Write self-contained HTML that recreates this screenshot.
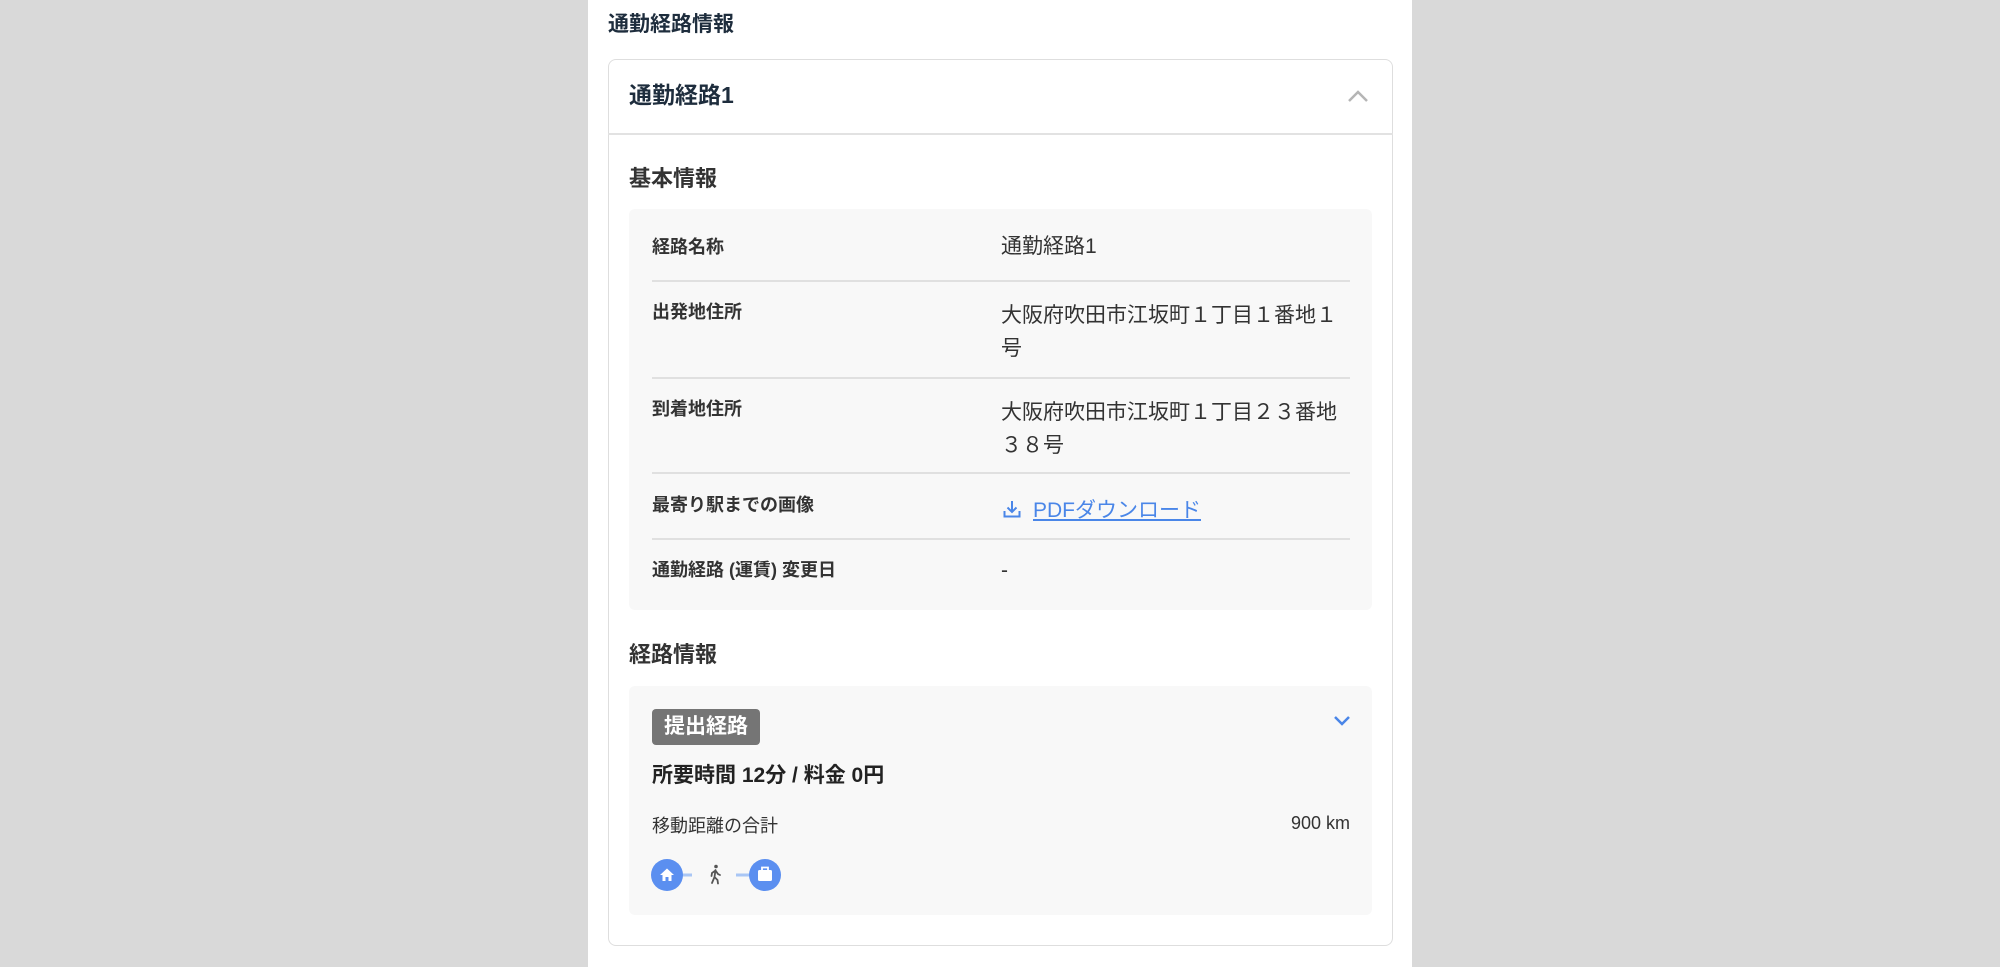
<!DOCTYPE html>
<html><head><meta charset="utf-8"><style>
*{margin:0;padding:0;box-sizing:border-box}
body{width:2000px;height:967px;background:#d9d9d9;font-family:"Liberation Sans","Noto Sans CJK JP",sans-serif;color:#333;position:relative;overflow:hidden}
.panel{position:absolute;left:588px;top:0;width:824px;height:967px;background:#fff}
.a{position:absolute;white-space:nowrap;line-height:1}
.t{font-weight:bold;color:#1e2d3d}
.card{position:absolute;left:608px;top:59px;width:785px;height:887px;border:1.5px solid #dedede;border-radius:8px;background:#fff}
.hb{position:absolute;left:608px;top:133px;width:785px;height:2px;background:#e2e2e2}
.box{position:absolute;background:#f8f8f8;border-radius:6px}
.lbl{font-weight:bold;font-size:18px;color:#333}
.val{font-size:21px;color:#333}
.div{position:absolute;left:652px;width:698px;height:2px;background:#e0e0e0}
</style></head><body>
<div class="panel"></div>
<div class="a t" style="left:608px;top:14px;font-size:21px">通勤経路情報</div>
<div class="card"></div>
<div class="hb"></div>
<div class="a t" style="left:629px;top:84px;font-size:23px">通勤経路1</div>
<svg class="a" style="left:1347px;top:89px" width="22" height="14" viewBox="0 0 22 14"><path d="M2 12 L11 3 L20 12" fill="none" stroke="#b5b5b5" stroke-width="2.5"/></svg>
<div class="a t" style="left:629px;top:168px;font-size:22px;color:#333">基本情報</div>
<div class="box" style="left:629px;top:209px;width:743px;height:401px"></div>
<div class="a lbl" style="left:652px;top:238px">経路名称</div>
<div class="a val" style="left:1001px;top:236px">通勤経路1</div>
<div class="div" style="top:280px"></div>
<div class="a lbl" style="left:652px;top:303px">出発地住所</div>
<div class="a val" style="left:1001px;top:299px;line-height:33px;white-space:normal;width:360px">大阪府吹田市江坂町１丁目１番地１<br>号</div>
<div class="div" style="top:377px"></div>
<div class="a lbl" style="left:652px;top:400px">到着地住所</div>
<div class="a val" style="left:1001px;top:396px;line-height:33px;white-space:normal;width:360px">大阪府吹田市江坂町１丁目２３番地<br>３８号</div>
<div class="div" style="top:472px"></div>
<div class="a lbl" style="left:652px;top:496px">最寄り駅までの画像</div>
<svg class="a" style="left:1002px;top:499px" width="20" height="20" viewBox="0 0 20 20"><path d="M10 2v11M5.5 8.5 10 13l4.5-4.5M2.5 12v5.5h15V12" fill="none" stroke="#4a86e8" stroke-width="2"/></svg>
<div class="a val" style="left:1033px;top:500px;color:#4a86e8;text-decoration:underline">PDFダウンロード</div>
<div class="div" style="top:538px"></div>
<div class="a lbl" style="left:652px;top:561px">通勤経路 (運賃) 変更日</div>
<div class="a val" style="left:1001px;top:560px">-</div>
<div class="a t" style="left:629px;top:644px;font-size:22px;color:#333">経路情報</div>
<div class="box" style="left:629px;top:686px;width:743px;height:229px"></div>
<div class="a" style="left:652px;top:709px;width:108px;height:36px;background:#757575;border-radius:4px;color:#fff;font-weight:bold;font-size:21px;line-height:36px;text-align:center">提出経路</div>
<svg class="a" style="left:1333px;top:714px" width="18" height="14" viewBox="0 0 18 14"><path d="M2 3 L9 10 L16 3" fill="none" stroke="#4a86e8" stroke-width="2.5"/></svg>
<div class="a" style="left:652px;top:765px;font-size:21px;font-weight:bold;color:#222">所要時間 12分 / 料金 0円</div>
<div class="a" style="left:652px;top:817px;font-size:18px;color:#333">移動距離の合計</div>
<div class="a" style="left:1270px;top:814px;width:80px;text-align:right;font-size:18px;color:#333">900 km</div>
<svg class="a" style="left:650px;top:858px" width="135" height="34" viewBox="0 0 135 34">
<rect x="30" y="15.5" width="12" height="3" fill="#a9c6f5"/>
<rect x="86" y="15.5" width="14" height="3" fill="#a9c6f5"/>
<circle cx="17" cy="17" r="16" fill="#5b8ff0"/>
<path d="M10 17 L17 10.5 L24 17 H21.5 V23 H18.5 V19 H15.5 V23 H12.5 V17Z" fill="#fff"/>
<g fill="none" stroke="#555" stroke-width="1.8" stroke-linecap="round"><circle cx="66" cy="8.5" r="1.8" fill="#555" stroke="none"/><path d="M65.5 12 L64.5 19 L62 25 M64.5 19 L67.5 22 L68 25.5 M65.5 12.5 L62 15 L61.5 18 M65.5 12.5 L68 16 L70 17"/></g>
<circle cx="115" cy="17" r="16" fill="#5b8ff0"/>
<rect x="108" y="12" width="14" height="11" rx="1.5" fill="#fff"/>
<path d="M112 12 V9.5 H118 V12" fill="none" stroke="#fff" stroke-width="1.8"/>
</svg>
</body></html>
